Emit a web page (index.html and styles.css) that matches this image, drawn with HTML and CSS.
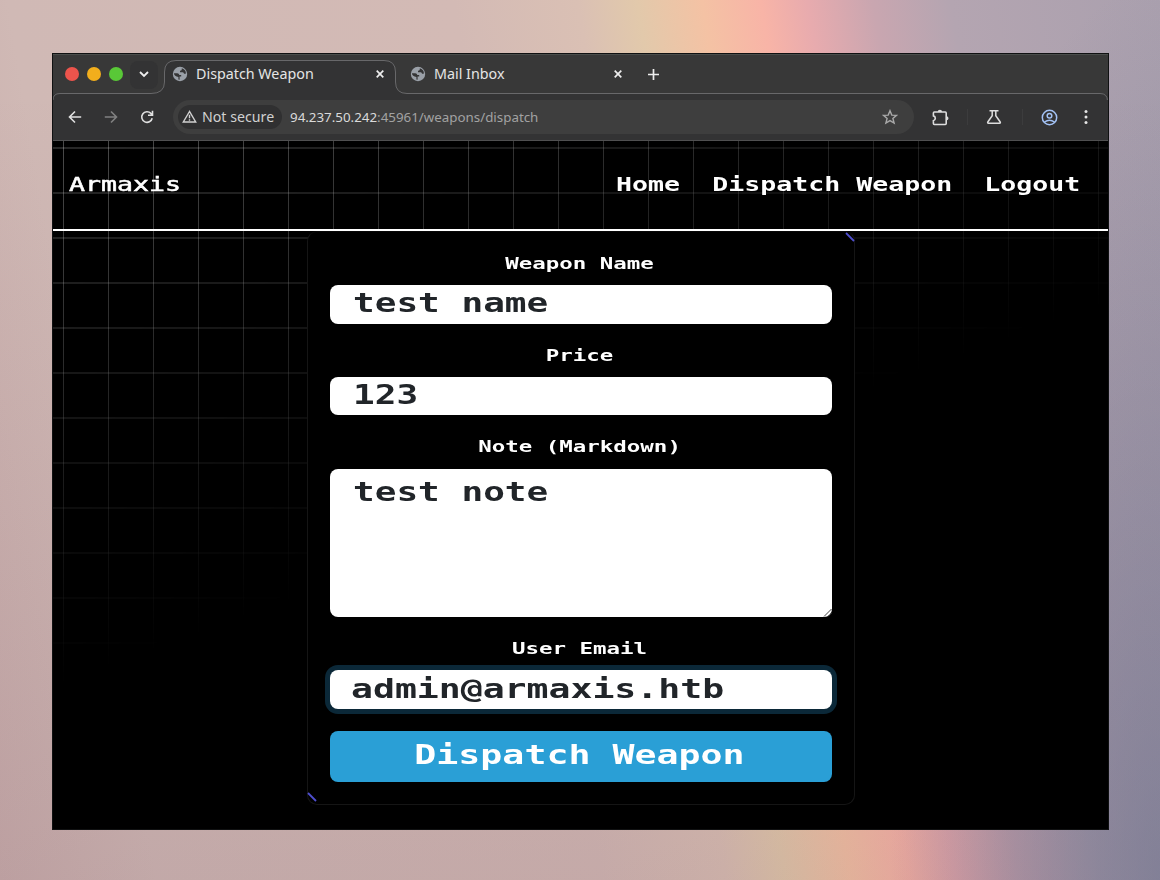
FILE: index.html
```html
<!DOCTYPE html>
<html lang="en">
<head>
<meta charset="utf-8">
<title>Dispatch Weapon</title>
<link rel="stylesheet" href="styles.css">
</head>
<body>
<svg class="defs" width="0" height="0" aria-hidden="true">
  <symbol id="globe" viewBox="0 0 16 16"><circle cx="8" cy="8" r="7.200" fill="#9aa0a8"/><path d="M1.900 7.300h3.300q1.900.1 2.100 1.700h1.900v1.500H7.600v3.300l-1.200-.3v-2.500Q2.300 10.500 1.900 7.300ZM9.800 2.300v1.200q-.3 1.300-1.800 1.300v1.500h2.700q1.300.1 1.300 1.500h1.800q.6-3.700-4-5.500Z" fill="#353536"/></symbol>
  <symbol id="close" viewBox="0 0 8 8"><path d="M.7.7l6.600 6.600M7.300.7L.7 7.300" fill="none" stroke="#eee" stroke-width="1.700"/></symbol>
</svg>
<div class="window">
  <div class="tabs">
    <div class="lights"><i class="red"></i><i class="amber"></i><i class="green"></i></div>
    <div class="tab-search"><svg width="10" height="7" viewBox="0 0 10 7"><path d="M1 1l4 4 4-4" fill="none" stroke="#eee" stroke-width="1.800"/></svg></div>
    <svg class="tab-outline" width="1055" height="40" viewBox="0 0 1055 40"><path d="M0 40Q0 33.500 7 33.500H98Q111.500 33.500 111.500 22V12Q111.500 .5 123 .5H331Q342.500 .5 342.500 12V22Q342.500 33.500 354 33.500H1047Q1054.500 33.500 1054.500 41H0Z" fill="#333334" stroke="#68686a"/></svg>
    <div class="tab active"><svg class="globe"><use href="#globe"/></svg><span class="title">Dispatch Weapon</span><svg class="close"><use href="#close"/></svg></div>
    <div class="tab"><svg class="globe"><use href="#globe"/></svg><span class="title">Mail Inbox</span><svg class="close"><use href="#close"/></svg></div>
    <svg class="plus" width="11" height="11" viewBox="0 0 11 11"><path d="M5.500 0v11M0 5.500h11" stroke="#eee" stroke-width="1.700"/></svg>
  </div>
  <div class="toolbar">
    <svg class="back" width="14" height="14" viewBox="0 0 14 14"><path d="M13.200 7H1.800M7 1.500L1.500 7 7 12.500" fill="none" stroke="#e0e0e0" stroke-width="1.600"/></svg>
    <svg class="forward" width="14" height="14" viewBox="0 0 14 14"><path d="M.8 7h11.400M7 1.500L12.500 7 7 12.500" fill="none" stroke="#818181" stroke-width="1.600"/></svg>
    <svg class="reload" width="14" height="14" viewBox="0 0 14 14"><path d="M12.200 8.200A5.300 5.300 0 1 1 10.900 3.400L12.500 5M12.500 .7V5.200H8" fill="none" stroke="#e0e0e0" stroke-width="1.600"/></svg>
    <div class="address">
      <div class="chip"><svg width="15" height="13" viewBox="0 0 15 13"><path d="M7.500 1.500L1.300 12h12.400ZM7.500 4.800v3.500M7.500 9.200v1.600" fill="none" stroke="#d0d0d0" stroke-width="1.400"/></svg><span>Not secure</span></div>
      <span class="url">94.237.50.242<span class="path">:45961/weapons/dispatch</span></span>
      <svg class="star" width="16" height="16" viewBox="0 0 16 16"><path d="M8 1.700l1.800 4.400 4.700.3-3.600 3 1.200 4.700L8 11.600l-4.100 2.500 1.200-4.700-3.600-3 4.700-.3Z" fill="none" stroke="#a9a9a9" stroke-width="1.400"/></svg>
    </div>
    <svg class="puzzle" width="17" height="17" viewBox="0 0 17 17"><path d="M2.300 3h11q.9 0 .9.900v10.700q0 .9-.9.900h-11q-.9 0-.9-.9v-2.900q1.900-.4 1.900-2.400t-1.900-2.400V3.900q0-.9.900-.9Z" fill="none" stroke="#dedede" stroke-width="1.600"/><path d="M5.700 3a2.200 2.200 0 0 1 4.400 0ZM14.400 7.200a2.100 2.100 0 0 1 0 4.200Z" fill="#dedede"/></svg>
    <i class="sep first"></i>
    <svg class="flask" width="16" height="16" viewBox="0 0 16 16"><path d="M3.500 1.800h9M6.200 1.800v5L1.800 13q-.6 1.300.7 1.300h11q1.300 0 .7-1.300L9.800 6.800v-5" fill="none" stroke="#dedede" stroke-width="1.500"/></svg>
    <i class="sep"></i>
    <svg class="profile" width="17" height="17" viewBox="0 0 17 17"><g fill="none" stroke="#a3c2f5" stroke-width="1.500"><circle cx="8.500" cy="8.500" r="7.200"/><circle cx="8.500" cy="6.700" r="2.300"/><path d="M3.500 13q5-3.700 10 0"/></g></svg>
    <svg class="menu" width="4" height="16" viewBox="0 0 4 16"><g fill="#e5e5e5"><circle cx="2" cy="2.500" r="1.500"/><circle cx="2" cy="8" r="1.500"/><circle cx="2" cy="13.500" r="1.500"/></g></svg>
  </div>
  <div class="page">
    <header class="navbar">
      <span class="brand">Armaxis</span>
      <nav class="nav"><a>Home</a><a>Dispatch Weapon</a><a>Logout</a></nav>
    </header>
    <main class="card">
      <svg class="spark top" width="10" height="10" viewBox="0 0 10 10"><path d="M1 1l8 8" stroke="#4f4fd0" stroke-width="1.800"/></svg>
      <svg class="spark bottom" width="10" height="10" viewBox="0 0 10 10"><path d="M1 1l8 8" stroke="#4f4fd0" stroke-width="1.800"/></svg>
      <div class="label">Weapon Name</div>
      <div class="field"><span>test name</span></div>
      <div class="label">Price</div>
      <div class="field price"><span>123</span></div>
      <div class="label note">Note (Markdown)</div>
      <div class="field area"><span>test note</span><svg class="grip" width="9" height="9" viewBox="0 0 9 9"><path d="M1 8.500L8.500 1M5 8.500L8.500 5" stroke="#444" stroke-width="1"/></svg></div>
      <div class="label">User Email</div>
      <div class="field focus"><span>admin@armaxis.htb</span></div>
      <div class="submit"><span>Dispatch Weapon</span></div>
    </main>
  </div>
</div>
</body>
</html>
```
FILE: styles.css
```css
* { box-sizing: border-box; }
body {
  margin: 0;
  height: 880px;
  padding: 53px 51px 50px 52px;
  overflow: hidden;
  background:
    radial-gradient(ellipse 270px 900px at 100% 100%, rgba(100,110,140,.55), transparent 100%),
    linear-gradient(180deg, transparent 10%, rgba(110,70,90,.14) 100%),
    linear-gradient(80.4deg, #c9aeac 0%, #d0b9b5 12%, #d3bab5 46%, #dac0b4 55.500%, #e2c9ab 60%, #f4c2a4 65%, #f8b4a7 69.500%, #e8abae 73%, #c9a6b0 78%, #b4a5b1 84%, #aaa0ae 100%);
  font-family: "Noto Sans", sans-serif;
}
.defs { position: absolute; }
svg { flex: none; display: block; }
.window {
  width: 1057px;
  height: 777px;
  border: 1px solid #101112;
  background: #000;
  overflow: hidden;
}
.tabs {
  position: relative;
  display: flex;
  align-items: center;
  height: 40px;
  background: #383838;
  border-top: 1px solid #4a4d4b;
}
.lights { display: flex; gap: 8px; margin: 0 0 2px 12px; }
.lights i { width: 14px; height: 14px; border-radius: 50%; }
.red { background: #ed544c; }
.amber { background: #f2ae1c; }
.green { background: #59c837; }
.tab-search {
  display: flex; align-items: center; justify-content: center;
  width: 28px; height: 28px; margin-left: 7px;
  border-radius: 8px; background: #333334;
}
.tab-outline { position: absolute; left: 0; top: 5px; }
.tab { position: relative; display: flex; align-items: center; width: 238px; padding-bottom: 1px; color: #e5e5e5; font-size: 14.300px; line-height: 20px; }
.tab.active { margin-left: 14px; }
.globe { width: 16px; height: 16px; margin-right: 8px; }
.title { flex: 1; white-space: nowrap; }
.close { width: 8px; height: 8px; margin-right: 26px; }
.plus { position: relative; margin: 0 0 1px 0; }
.toolbar {
  display: flex;
  align-items: center;
  height: 47px;
  padding-left: 15px;
  background: #333334;
  border-bottom: 1px solid #505051;
}
.forward { margin-left: 22px; }
.reload { margin-left: 22px; }
.address {
  display: flex; align-items: center;
  width: 741px; height: 34px; margin-left: 19px; padding-left: 5px;
  border-radius: 17px; background: #3e3e3e;
}
.chip {
  display: flex; align-items: center; gap: 5px;
  width: 104px; height: 24px; padding: 0 0 1px 4px;
  border-radius: 12px; background: #303031; color: #d0d0d0; font-size: 14.200px; white-space: nowrap;
}
.url { margin-left: 8px; flex: 1; color: #dadada; font-size: 13.350px; white-space: nowrap; }
.path { color: #a2a2a2; }
.star { margin-right: 16px; }
.puzzle { margin-left: 18px; }
.sep { width: 1px; height: 16px; margin-left: 18px; background: #3c3c3d; }
.flask { margin-left: 18px; }
.flask + .sep { margin-left: 20px; }
.profile { margin-left: 18px; }
.menu { margin-left: 26px; }
.page {
  position: relative;
  height: 688px;
  isolation: isolate;
  font-family: "DejaVu Sans Mono", monospace;
  font-weight: 700;
  color: #fff;
}
.page::before {
  content: "";
  position: absolute;
  inset: 0;
  z-index: -1;
  background:
    linear-gradient(90deg, rgba(255,255,255,.29) 1px, transparent 1px) 10px 0 / 45px 45px,
    linear-gradient(180deg, rgba(255,255,255,.16) 2px, transparent 2px) 0 6px / 45px 45px;
  mask-image: linear-gradient(160deg, #000 0%, transparent 51%);
}
.navbar {
  display: flex; align-items: center; justify-content: space-between;
  height: 90px; padding: 0 28px 2px 16px;
  border-bottom: 2px solid #fff;
}
.brand { font-size: 19px; line-height: 24px; font-weight: 400; transform: scaleX(1.399); transform-origin: left; -webkit-text-stroke: .5px #fff; }
.nav { display: flex; gap: 24.080px; font-size: 20px; line-height: 24px; white-space: nowrap; transform: scaleX(1.329); transform-origin: right; }
.card {
  position: relative;
  width: 548px; height: 574px; margin-left: 254px; padding: 0 22px;
  background: #000; border: 1px solid #151515; border-top-color: #080808; border-radius: 10px;
}
.spark { position: absolute; }
.spark.top { right: -1px; top: 0; }
.spark.bottom { left: -1px; bottom: 2px; }
.label { height: 53px; padding: 22px 2px 0 0; text-align: center; font-size: 16px; line-height: 20px; transform: scaleX(1.402); }
.label.note { height: 54px; }
.field {
  position: relative; display: flex;
  height: 39px; padding: 2px 0 0 23px;
  border-radius: 8px; background: #fff; color: #212529;
  font-size: 26px; line-height: 32px; white-space: nowrap;
}
.field span { transform: scaleX(1.386); transform-origin: left; }
.field.price { height: 38px; }
.field.area { height: 148px; padding-top: 7px; }
.field.focus { padding: 3px 0 0 21px; box-shadow: 0 0 0 5px #0b2838; }
.field.focus span { transform: scaleX(1.402); }
.grip { position: absolute; right: 0; bottom: 0; }
.submit {
  display: flex; justify-content: center;
  height: 51px; margin-top: 22px; padding: 8px 4px 0 0;
  border-radius: 8px; background: #2a9fd6; font-size: 26px; line-height: 32px;
}
.submit span { transform: scaleX(1.406); }
```
